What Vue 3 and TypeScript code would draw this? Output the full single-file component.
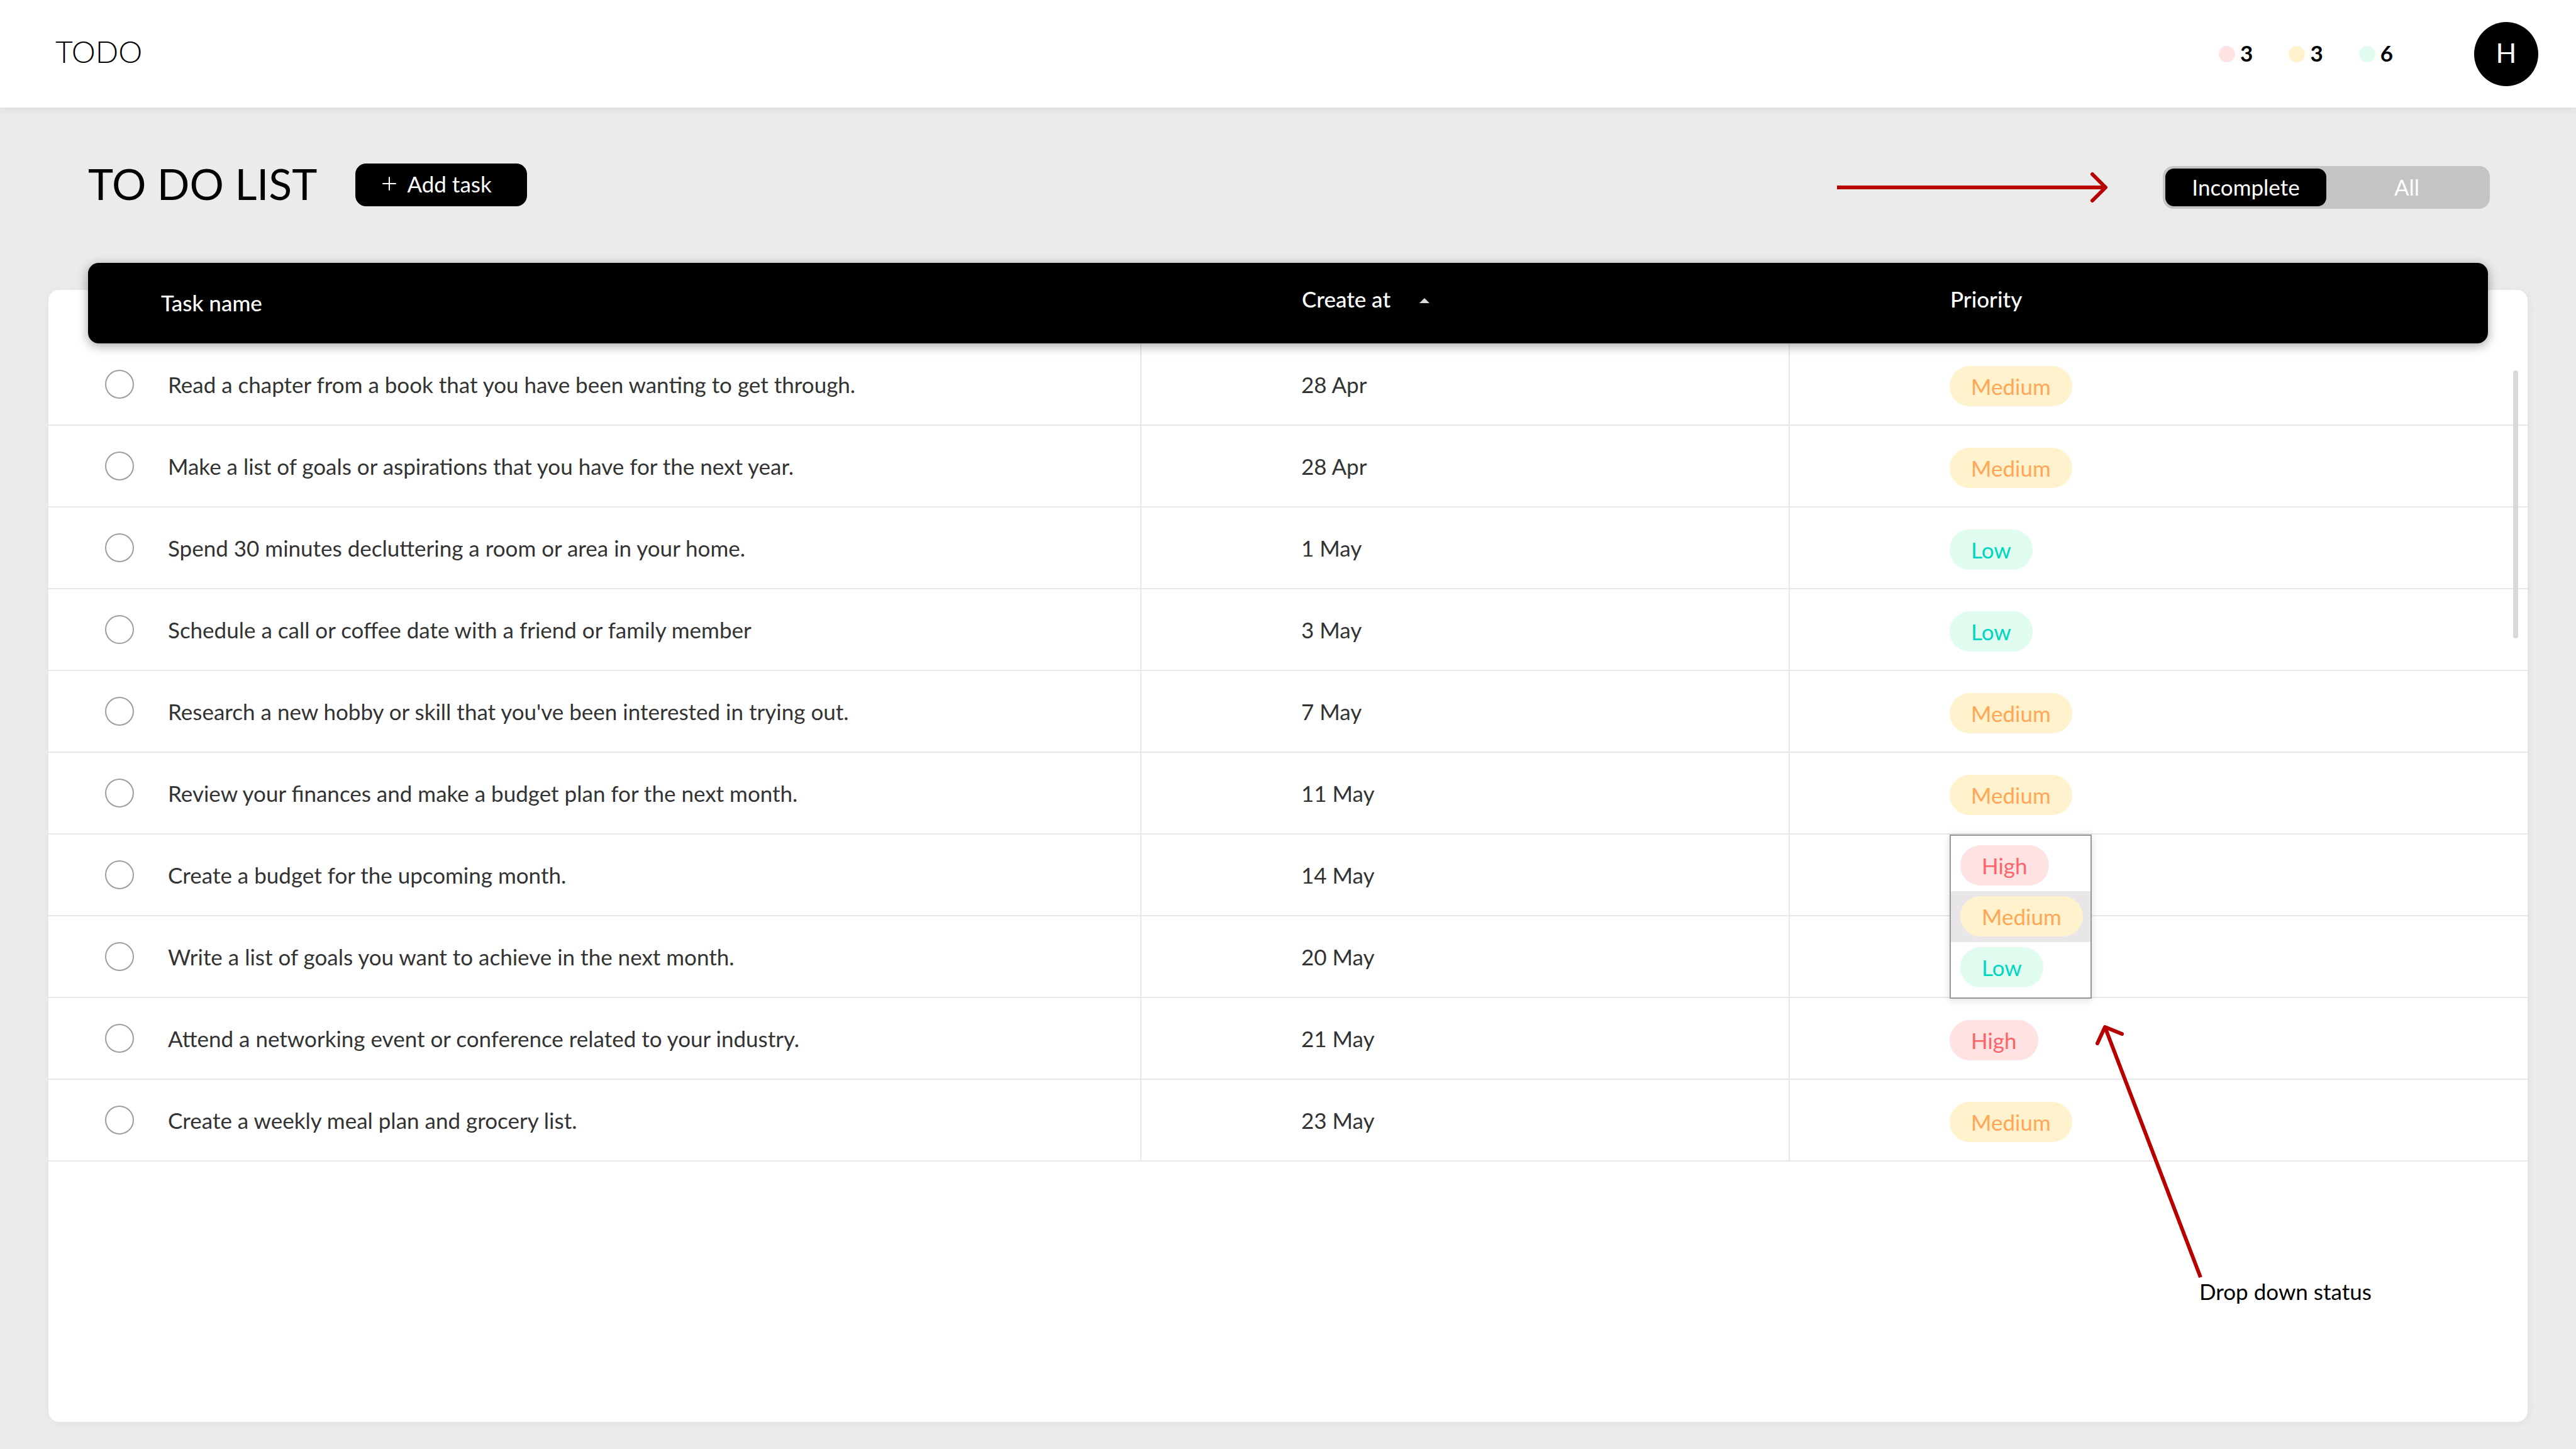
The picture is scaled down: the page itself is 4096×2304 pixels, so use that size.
<script setup lang="ts">
import { ref } from 'vue'

type Priority = 'High' | 'Medium' | 'Low'

interface Task {
  name: string
  created: string
  priority?: Priority
  editing?: boolean
}

const levels: Priority[] = ['High', 'Medium', 'Low']

const counts = [
  { level: 'High', total: 3 },
  { level: 'Medium', total: 3 },
  { level: 'Low', total: 6 },
]

const tasks: Task[] = [
  { name: 'Read a chapter from a book that you have been wanting to get through.', created: '28 Apr', priority: 'Medium' },
  { name: 'Make a list of goals or aspirations that you have for the next year.', created: '28 Apr', priority: 'Medium' },
  { name: 'Spend 30 minutes decluttering a room or area in your home.', created: '1 May', priority: 'Low' },
  { name: 'Schedule a call or coffee date with a friend or family member', created: '3 May', priority: 'Low' },
  { name: "Research a new hobby or skill that you've been interested in trying out.", created: '7 May', priority: 'Medium' },
  { name: 'Review your finances and make a budget plan for the next month.', created: '11 May', priority: 'Medium' },
  { name: 'Create a budget for the upcoming month.', created: '14 May', editing: true },
  { name: 'Write a list of goals you want to achieve in the next month.', created: '20 May' },
  { name: 'Attend a networking event or conference related to your industry.', created: '21 May', priority: 'High' },
  { name: 'Create a weekly meal plan and grocery list.', created: '23 May', priority: 'Medium' },
]

const filter = ref<'Incomplete' | 'All'>('Incomplete')
const picked = ref<Priority>('Medium')
</script>

<template>
  <div class="page">
    <header class="topbar">
      <span class="brand">TODO</span>
      <ul class="counts">
        <li v-for="c in counts" :key="c.level" class="count">
          <span class="dot" :class="c.level.toLowerCase()"></span>
          <span class="total">{{ c.total }}</span>
        </li>
      </ul>
      <button type="button" class="avatar">H</button>
    </header>

    <section class="toolbar">
      <div class="heading">
        <h1 class="title">TO DO LIST</h1>
        <button type="button" class="add">
          <svg class="plus" viewBox="0 0 22 22" aria-hidden="true">
            <path d="M11 1V21M1 11H21" />
          </svg>
          Add task
        </button>
      </div>
      <div class="filters">
        <svg class="arrow hint" viewBox="0 0 432 50" aria-hidden="true">
          <path class="shaft" d="M0 25H427" />
          <path class="head" d="M406 4L427 25L406 46" />
        </svg>
        <div class="toggle">
          <button type="button" :class="{ on: filter === 'Incomplete' }" @click="filter = 'Incomplete'">Incomplete</button>
          <button type="button" :class="{ on: filter === 'All' }" @click="filter = 'All'">All</button>
        </div>
      </div>
    </section>

    <main class="card">
      <table class="table">
        <thead>
          <tr>
            <th scope="col" class="name-head">Task name</th>
            <th scope="col" class="lift">
              Create at
              <svg class="caret" viewBox="0 0 16 8" aria-hidden="true"><path d="M8 0L16 8H0Z" /></svg>
            </th>
            <th scope="col" class="lift">Priority</th>
          </tr>
        </thead>
        <tbody>
          <tr v-for="(t, i) in tasks" :key="t.name">
            <td class="name">
              <input :id="`task-${i}`" type="checkbox" class="check" />
              <label :for="`task-${i}`">{{ t.name }}</label>
            </td>
            <td>{{ t.created }}</td>
            <td class="priority">
              <button v-if="t.priority" type="button" class="pill" :class="t.priority.toLowerCase()">{{ t.priority }}</button>
              <template v-if="t.editing">
                <ul class="menu">
                  <li v-for="l in levels" :key="l" :class="{ active: l === picked }">
                    <button type="button" class="pill" :class="l.toLowerCase()" @click="picked = l">{{ l }}</button>
                  </li>
                </ul>
                <div class="note">
                  <svg class="arrow pointer" viewBox="0 0 172 406" aria-hidden="true">
                    <path class="shaft" d="M16 6L168 404" />
                    <path class="head" d="M4 32L16 6L43 17" />
                  </svg>
                  <span class="note-text">Drop down status</span>
                </div>
              </template>
            </td>
          </tr>
        </tbody>
      </table>
      <div class="scroll-thumb"></div>
    </main>
  </div>
</template>

<style>
body {
  background: #ebebeb;
}
</style>

<style scoped>
.page {
  display: flex;
  flex-direction: column;
  box-sizing: border-box;
  min-height: 100vh;
  padding-bottom: 43px;
  background: #ebebeb;
  color: #000;
  font-family: Lato, 'Noto Sans', sans-serif;
  font-size: 35px;
  line-height: 44px;
}

button {
  margin: 0;
  padding: 0;
  border: 0;
  background: none;
  color: inherit;
  font: inherit;
  cursor: pointer;
}

ul {
  margin: 0;
  padding: 0;
  list-style: none;
}

.topbar {
  display: flex;
  align-items: center;
  height: 171px;
  padding: 0 60px 0 88px;
  background: #fff;
  box-shadow: 0 2px 12px rgba(0, 0, 0, 0.08);
}

.brand {
  margin-right: auto;
  padding-bottom: 8px;
  font-size: 48px;
  font-weight: 300;
}

.counts {
  display: flex;
  gap: 57px;
  margin-right: 129px;
}

.count {
  display: flex;
  align-items: center;
  gap: 8px;
  font-weight: 700;
}

.total {
  padding-bottom: 4px;
}

.dot {
  width: 26px;
  height: 26px;
  border-radius: 50%;
}

.avatar {
  width: 102px;
  height: 102px;
  padding-bottom: 4px;
  border-radius: 50%;
  background: #000;
  color: #fff;
  font-size: 43px;
}

.toolbar {
  display: flex;
  justify-content: space-between;
  padding: 89px 137px 129px 140px;
}

.heading {
  display: flex;
  align-items: center;
  gap: 61px;
  padding-bottom: 4px;
}

.title {
  margin: 0;
  padding-bottom: 4px;
  font-size: 68px;
  font-weight: 400;
  line-height: 64px;
}

.add {
  display: flex;
  align-items: center;
  gap: 17px;
  box-sizing: border-box;
  width: 273px;
  height: 68px;
  padding: 0 0 4px 43px;
  border-radius: 17px;
  background: #000;
  color: #fff;
}

.plus {
  width: 22px;
  height: 22px;
  fill: none;
  stroke: #fff;
  stroke-width: 2;
  stroke-linecap: round;
}

.arrow {
  display: block;
  fill: none;
  stroke: #b80000;
  stroke-width: 6;
}

.head {
  stroke-linecap: round;
  stroke-linejoin: round;
}

.filters {
  display: flex;
  align-items: center;
  gap: 86px;
  padding-top: 4px;
}

.hint {
  width: 432px;
  height: 50px;
}

.toggle {
  display: flex;
  box-sizing: border-box;
  width: 520px;
  height: 68px;
  padding: 4px;
  border-radius: 17px;
  background: #c4c4c4;
  color: #fff;
}

.toggle button {
  flex: 1;
  padding-bottom: 2px;
  border-radius: 14px;
}

.toggle .on {
  background: #000;
}

.card {
  position: relative;
  flex: 1;
  margin: 0 77px;
  border-radius: 17px;
  background: #fff;
  box-shadow: 2px 2px 14px rgba(0, 0, 0, 0.05);
}

.table {
  display: block;
  margin-top: -43px;
}

thead,
tbody {
  display: block;
}

tbody {
  padding-top: 1px;
}

tr {
  position: relative;
  display: grid;
  grid-template-columns: 1736fr 1031fr 1175fr;
}

th,
td {
  box-sizing: border-box;
  display: flex;
  align-items: center;
}

th {
  position: relative;
  height: 128px;
  padding: 0 0 14px 257px;
  color: #fff;
  font-weight: 500;
}

/* Black bar, inset from both edges of the card */
thead tr::before {
  content: '';
  position: absolute;
  inset: 0 63px;
  border-radius: 17px;
  background: #000;
  box-shadow: 0 4px 17px rgba(0, 0, 0, 0.36);
}

.name-head {
  padding: 0 0 2px 179px;
}

.caret {
  width: 16px;
  height: 8px;
  margin: 6px 0 0 46px;
  fill: #d9d9d9;
}

td {
  height: 130px;
  padding-left: 254px;
  border-bottom: 2px solid rgba(0, 0, 0, 0.09);
  color: #333;
}

td + td {
  border-left: 2px solid rgba(0, 0, 0, 0.09);
}

.name {
  gap: 54px;
  padding-left: 90px;
}

.check {
  box-sizing: border-box;
  width: 46px;
  height: 46px;
  margin: 0;
  border: 2px solid #9e9e9e;
  border-radius: 50%;
  appearance: none;
}

.priority {
  position: relative;
  padding-top: 6px;
}

.pill {
  display: block;
  height: 64px;
  padding: 0 34px;
  border-radius: 32px;
}

.high {
  background: #ffe2e2;
  color: #ff6268;
}

.medium {
  background: #fff2cc;
  color: #ffa756;
}

.low {
  background: #e0fcef;
  color: #00d5c0;
}

.menu {
  position: absolute;
  z-index: 1;
  top: 0;
  left: 254px;
  box-sizing: border-box;
  width: 226px;
  padding: 7px 0;
  border: 2px solid #979797;
  background: #fff;
  box-shadow: 0 2px 12px rgba(0, 0, 0, 0.14);
}

.menu li {
  padding: 8px 15px 9px;
}

.menu .active {
  background: #e8e6e8;
}

.note {
  position: absolute;
  z-index: 1;
  top: 300px;
  left: 485px;
  color: #000;
}

.pointer {
  width: 172px;
  height: 406px;
}

.note-text {
  display: block;
  margin: -2px 0 0 166px;
  white-space: nowrap;
}

.scroll-thumb {
  position: absolute;
  top: 128px;
  right: 15px;
  width: 8px;
  height: 426px;
  border-radius: 4px;
  background: #d9d9d9;
}
</style>
